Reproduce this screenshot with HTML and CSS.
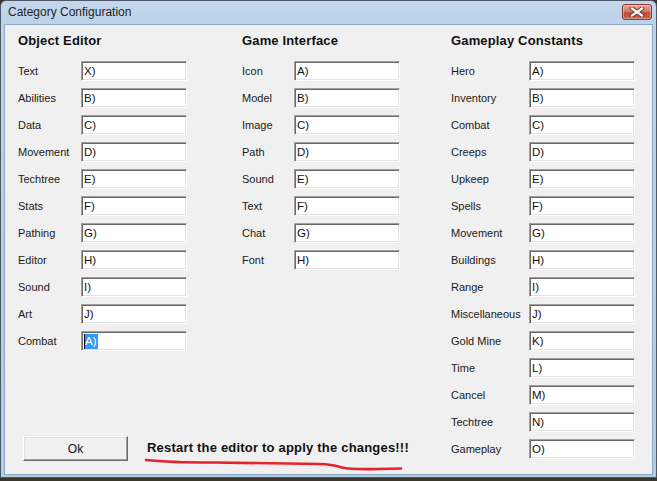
FILE: index.html
```html
<!DOCTYPE html>
<html>
<head>
<meta charset="utf-8">
<link rel="stylesheet" href="styles.css">
</head>
<body>
<div class="window">
  <div class="titlebar">
    <span class="title">Category Configuration</span>
    <div class="close">
      <svg width="16" height="10" viewBox="0 0 16 10">
        <path d="M3 1.5 L13 8.5 M13 1.5 L3 8.5" stroke="#6b3a33" stroke-width="4" stroke-linecap="square" fill="none"/>
        <path d="M3 1.5 L13 8.5 M13 1.5 L3 8.5" stroke="#ffffff" stroke-width="2.2" stroke-linecap="square" fill="none"/>
      </svg>
    </div>
  </div>
  <div class="client">
    <div class="left">
      <div class="cols">
        <section class="col col1">
          <h2>Object Editor</h2>
          <div class="rows">
            <label>Text</label><div class="field">X)</div>
            <label>Abilities</label><div class="field">B)</div>
            <label>Data</label><div class="field">C)</div>
            <label>Movement</label><div class="field">D)</div>
            <label>Techtree</label><div class="field">E)</div>
            <label>Stats</label><div class="field">F)</div>
            <label>Pathing</label><div class="field">G)</div>
            <label>Editor</label><div class="field">H)</div>
            <label>Sound</label><div class="field">I)</div>
            <label>Art</label><div class="field">J)</div>
            <label>Combat</label><div class="field"><span class="caret"></span><span class="sel">A)</span></div>
          </div>
        </section>
        <section class="col col2">
          <h2>Game Interface</h2>
          <div class="rows">
            <label>Icon</label><div class="field">A)</div>
            <label>Model</label><div class="field">B)</div>
            <label>Image</label><div class="field">C)</div>
            <label>Path</label><div class="field">D)</div>
            <label>Sound</label><div class="field">E)</div>
            <label>Text</label><div class="field">F)</div>
            <label>Chat</label><div class="field">G)</div>
            <label>Font</label><div class="field">H)</div>
          </div>
        </section>
      </div>
      <div class="footer">
        <div class="btn">Ok</div>
        <span class="notice">Restart the editor to apply the changes!!!</span>
        <svg class="scribble" width="262" height="16" viewBox="0 0 262 16">
          <path d="M2 3 C 20 5, 40 5.5, 70 5.5 C 110 6, 150 6.5, 175 7 C 185 7.2, 190 8, 198 10.5 C 206 12.5, 215 12.5, 235 12 L 257 11.5" stroke="#e8222c" stroke-width="2.6" stroke-linecap="round" fill="none"/>
        </svg>
      </div>
    </div>
    <section class="col col3">
      <h2>Gameplay Constants</h2>
      <div class="rows">
        <label>Hero</label><div class="field">A)</div>
        <label>Inventory</label><div class="field">B)</div>
        <label>Combat</label><div class="field">C)</div>
        <label>Creeps</label><div class="field">D)</div>
        <label>Upkeep</label><div class="field">E)</div>
        <label>Spells</label><div class="field">F)</div>
        <label>Movement</label><div class="field">G)</div>
        <label>Buildings</label><div class="field">H)</div>
        <label>Range</label><div class="field">I)</div>
        <label>Miscellaneous</label><div class="field">J)</div>
        <label>Gold Mine</label><div class="field">K)</div>
        <label>Time</label><div class="field">L)</div>
        <label>Cancel</label><div class="field">M)</div>
        <label>Techtree</label><div class="field">N)</div>
        <label>Gameplay</label><div class="field">O)</div>
      </div>
    </section>
  </div>
</div>
</body>
</html>
```

FILE: styles.css
```css
html, body {
  margin: 0;
  padding: 0;
}
body {
  width: 657px;
  height: 481px;
  background: #3b342a;
  font-family: "Liberation Sans", Arial, sans-serif;
  overflow: hidden;
}
.window {
  box-sizing: border-box;
  width: 657px;
  height: 478px;
  border: 1px solid #4d5966;
  border-radius: 6px 6px 0 0;
  background: linear-gradient(to bottom, #c3d6ec 0px, #bcd2ea 24px, #aecde9 100%);
  padding: 0 3px 2px 3px;
  display: flex;
  flex-direction: column;
}
.titlebar {
  height: 23px;
  display: flex;
  align-items: center;
  justify-content: space-between;
  padding: 0 1px 0 4px;
  flex: none;
}
.title {
  font-family: "Liberation Sans", Arial, sans-serif;
  font-size: 12px;
  color: #1e1e1e;
  padding-bottom: 1px;
}
.close {
  width: 30px;
  height: 16px;
  box-sizing: border-box;
  border: 1px solid #8a3a30;
  border-radius: 3px;
  background: linear-gradient(to bottom, #e6a496 0%, #d47a68 45%, #c24a38 55%, #c8604e 100%);
  display: flex;
  align-items: center;
  justify-content: center;
  box-shadow: inset 0 0 0 1px rgba(255,255,255,0.35);
  margin-top: -2px;
}
.client {
  flex: 1;
  background: #f0f0f0;
  border: 1px solid #8ea7c2;
  display: flex;
  padding: 8px 0 13px 13px;
  box-sizing: border-box;
}
.left {
  display: flex;
  flex-direction: column;
  width: 433px;
}
.cols {
  display: flex;
}
.col1 { width: 224px; }
.col2 { width: 209px; }
.col3 { width: 190px; }
h2 {
  margin: 0 0 12px 0;
  font-size: 13px;
  line-height: 16px;
  font-weight: bold;
  color: #111;
  letter-spacing: 0.15px;
}
.rows {
  display: grid;
  row-gap: 7px;
  align-items: center;
}
.col1 .rows { grid-template-columns: 63px 106px; }
.col2 .rows { grid-template-columns: 52px 106px; }
.col3 .rows { grid-template-columns: 78px 106px; }
label {
  font-size: 11px;
  color: #1a1a1a;
  white-space: nowrap;
}
.field {
  box-sizing: border-box;
  height: 20px;
  background: #fff;
  border-top: 1px solid #a0a0a0;
  border-left: 1px solid #a0a0a0;
  border-bottom: 1px solid #ffffff;
  border-right: 1px solid #ffffff;
  box-shadow: inset 1px 1px 0 #696969, inset -1px -1px 0 #e3e3e3;
  padding: 0 2px;
  font-size: 11.5px;
  line-height: 18px;
  color: #111;
  display: flex;
  align-items: center;
}
.sel {
  background: #3399ff;
  color: #fff;
  line-height: 15px;
  padding: 0 1px 0 0;
}
.caret {
  width: 1px;
  height: 15px;
  background: #000;
}
.footer {
  margin-top: auto;
  display: flex;
  align-items: center;
  gap: 19px;
  position: relative;
  padding-left: 5px;
}
.btn {
  box-sizing: border-box;
  width: 105px;
  height: 25px;
  background: #f0f0f0;
  border-top: 1px solid #ffffff;
  border-left: 1px solid #ffffff;
  border-right: 1px solid #696969;
  border-bottom: 1px solid #696969;
  box-shadow: inset -1px -1px 0 #a0a0a0, inset 1px 1px 0 #e3e3e3;
  font-size: 12px;
  color: #111;
  display: flex;
  align-items: center;
  justify-content: center;
}
.notice {
  font-size: 13px;
  font-weight: bold;
  color: #111;
  letter-spacing: 0.2px;
  margin-top: -3px;
}
.scribble {
  position: absolute;
  left: 126px;
  top: 21px;
}
```
